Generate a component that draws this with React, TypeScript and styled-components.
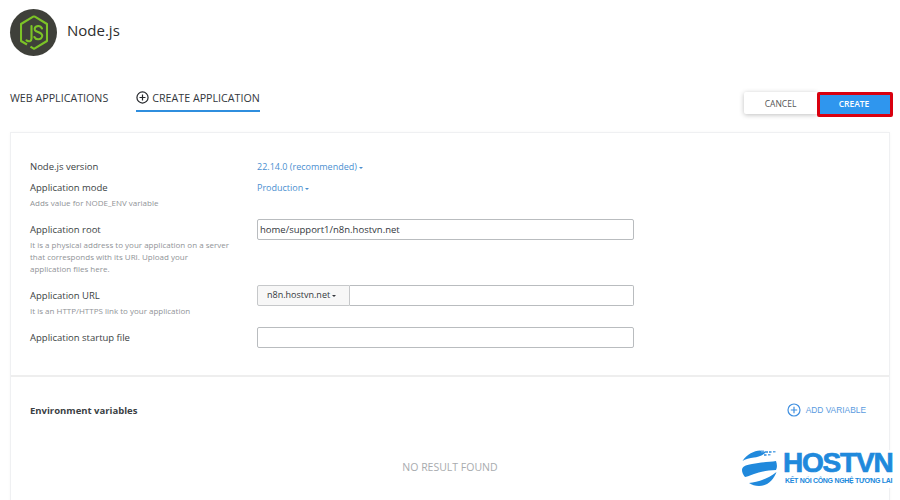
import React from "react";
import styled, { createGlobalStyle } from "styled-components";

const GlobalStyle = createGlobalStyle`
  html, body {
    margin: 0;
    padding: 0;
    background: #fff;
    font-family: "Open Sans", "Noto Sans", sans-serif;
    overflow: hidden;
  }
`;

const Page = styled.div`
  position: relative;
  width: 900px;
  height: 500px;
  overflow: hidden;
  padding: 9px 7px 0 10px;
  box-sizing: border-box;
`;

const Header = styled.header`
  display: flex;
  align-items: flex-start;
  gap: 10px;
  height: 47px;
`;

const LogoCircle = styled.div`
  width: 47px;
  height: 47px;
  border-radius: 50%;
  background: #3f403a;
  display: flex;
  align-items: center;
  justify-content: center;
`;

const Title = styled.h1`
  margin: 12px 0 0;
  font-size: 15px;
  line-height: 18px;
  font-weight: 400;
  color: #2d2d2d;
`;

const TabBar = styled.div`
  display: flex;
  justify-content: space-between;
  align-items: flex-start;
  margin-top: 26px;
  height: 50px;
`;

const Tabs = styled.nav`
  display: flex;
  gap: 28px;
  margin-top: 9px;
`;

const Tab = styled.div<{ $active?: boolean }>`
  display: flex;
  align-items: flex-start;
  gap: 3px;
  height: 19px;
  font-size: 10.7px;
  line-height: 14px;
  color: #33373d;
  border-bottom: ${(p) => (p.$active ? "2px solid #2f8ede" : "none")};
`;

const Actions = styled.div`
  display: flex;
  align-items: flex-start;
  margin-top: 10px;
`;

const CancelButton = styled.button`
  width: 73px;
  height: 22px;
  border: none;
  border-radius: 2px 0 0 2px;
  background: #fff;
  box-shadow: 0 1px 5px rgba(0, 0, 0, 0.25);
  font: 400 8.5px "Open Sans", sans-serif;
  color: #555;
`;

const CreateButton = styled.button`
  width: 76px;
  height: 25px;
  box-sizing: border-box;
  border: 3px solid #d9000f;
  border-radius: 2px;
  background: #2f96ee;
  font: 600 8.5px "Open Sans", sans-serif;
  color: #fff;
  padding: 0 2px 3px 0;
`;

const Card = styled.section`
  width: 880px;
  height: 380px;
  box-sizing: border-box;
  border: 1px solid #eff0f2;
  border-bottom: none;
  box-shadow: 0 0 3px rgba(0, 0, 0, 0.03);
`;

const FormArea = styled.div`
  height: 244px;
  box-sizing: border-box;
  padding: 27px 19px 0;
  border-bottom: 2px solid #eeeeee;
`;

const Row = styled.div<{ $h: number }>`
  display: grid;
  grid-template-columns: 227px 1fr;
  height: ${(p) => p.$h}px;
`;

const LabelCell = styled.div<{ $pad?: number }>`
  padding-top: ${(p) => p.$pad ?? 0}px;
`;

const Label = styled.div`
  font-size: 9.5px;
  line-height: 14px;
  color: #3b3f44;
`;

const Hint = styled.div`
  width: 200px;
  font-size: 8px;
  line-height: 12px;
  color: #909397;
  margin-top: 2px;
`;

const Dropdown = styled.span`
  font-size: 9px;
  line-height: 14px;
  color: #4b8fd0;
`;

const Caret = styled.i`
  display: inline-block;
  vertical-align: middle;
  width: 0;
  height: 0;
  margin-left: 2px;
  border: 2px solid transparent;
  border-top-color: currentColor;
  border-bottom: none;
`;

const TextInput = styled.div`
  width: 377px;
  height: 21px;
  box-sizing: border-box;
  border: 1px solid #b9bcbf;
  border-radius: 2px;
  padding: 0 2px;
  font-size: 9.5px;
  line-height: 19px;
  color: #33373d;
`;

const InputGroup = styled.div`
  display: flex;
  width: 377px;
  height: 21px;
`;

const Addon = styled.div`
  width: 93px;
  box-sizing: border-box;
  background: #f7f7f7;
  border: 1px solid #c6c8ca;
  border-radius: 2px 0 0 2px;
  padding-left: 9px;
  font-size: 9px;
  line-height: 17px;
  color: #33373d;
`;

const GroupField = styled.div`
  flex: 1;
  border: 1px solid #b9bcbf;
  border-left: none;
  border-radius: 0 2px 2px 0;
`;

const EnvArea = styled.div`
  padding: 26px 19px 0;
`;

const EnvHeader = styled.div`
  display: flex;
  justify-content: space-between;
  align-items: center;
  padding-right: 4px;
  height: 14px;
`;

const EnvTitle = styled.div`
  font-size: 9.5px;
  font-weight: 700;
  color: #3b3f44;
`;

const AddVariable = styled.div`
  display: flex;
  align-items: center;
  gap: 5px;
  font-family: "Liberation Sans", sans-serif;
  font-size: 8.4px;
  color: #5a9be0;
`;

const EmptyText = styled.div`
  margin-top: 43px;
  text-align: center;
  font-size: 10.5px;
  line-height: 14px;
  color: #a8abae;
`;

const Watermark = styled.div`
  position: absolute;
  left: 742px;
  top: 450px;
  width: 151px;
  height: 38px;
  display: flex;
  gap: 5px;
  background: #fff;
`;

const GlobeSlot = styled.div`
  flex: none;
  width: 36px;
  height: 37px;
`;

const WatermarkText = styled.div`
  display: flex;
  flex-direction: column;
  white-space: nowrap;
  color: #2089dc;
`;

const Brand = styled.div`
  font-family: "Liberation Sans", sans-serif;
  font-weight: 700;
  font-size: 28px;
  line-height: 26px;
  letter-spacing: -1.2px;
  -webkit-text-stroke: 0.7px #2089dc;
`;

const Slogan = styled.div`
  font-family: "Liberation Sans", sans-serif;
  font-weight: 700;
  font-size: 7px;
  line-height: 10px;
  letter-spacing: -0.3px;
  margin-left: 2px;
`;

const NodeIcon = () => (
  <svg width="28" height="35" viewBox="0 0 28 35" fill="none" stroke="#7cc327" strokeWidth="2.1">
    <path d="M14 1.2 L27 9 V26 L14 33.8 L10.5 31.7" strokeLinejoin="round" />
    <path d="M7 29.5 L1 26 V9 L14 1.2" strokeLinejoin="round" />
    <path d="M11.5 11 V23.5 C11.5 26.5 8.8 27 6.5 25.3" strokeLinecap="round" />
    <path d="M22 13.5 C21 11.5 19 10.8 17.5 11.1 C15 11.5 14.2 13.4 15 15.2 C16 17.2 21.6 17 22.2 20.3 C22.6 23 20 24.4 18 24.2 C16.4 24.1 15 23.3 14.4 22" strokeLinecap="round" />
  </svg>
);

const PlusCircle = ({ size, color, w }: { size: number; color: string; w: number }) => (
  <svg width={size} height={size} viewBox="0 0 14 14" fill="none" stroke={color} strokeWidth={w}>
    <circle cx="7" cy="7" r="6" />
    <path d="M7 3.8 V10.2 M3.8 7 H10.2" />
  </svg>
);

const Globe = () => (
  <svg width="36" height="37" viewBox="0 0 36 37" fill="#2089dc">
    <path d="M0.5 11 C5 4 12 1 18 0.5 L24 2 C21 6 15 7 12 7.5 C8 8 3 9 0.5 11 Z" />
    <path d="M0 20 C0 17 3 15 10 14 C20 12 28 12 34 11 C35 14 35.5 17 34 20 C26 20 18 22 12 24 C7 26 4 27 3 27 C1 25 0 22 0 20 Z" />
    <path d="M7 33 C15 32 26 29 34.5 22 C32 29 26 36 17 36 C13 36 10 35 7 33 Z" />
    <g fill="#5fa8e6">
      <rect x="19" y="0.5" width="3" height="2" />
      <rect x="23" y="1" width="3" height="2" />
      <rect x="27" y="1" width="2.5" height="2" />
      <rect x="31" y="1" width="2.5" height="1.5" />
      <rect x="22" y="4" width="2.5" height="2" />
      <rect x="26" y="4" width="2.5" height="1.5" />
    </g>
  </svg>
);

export default function App() {
  return (
    <>
      <GlobalStyle />
      <Page>
        <Header>
          <LogoCircle>
            <NodeIcon />
          </LogoCircle>
          <Title>Node.js</Title>
        </Header>

        <TabBar>
          <Tabs>
            <Tab>WEB APPLICATIONS</Tab>
            <Tab $active>
              <PlusCircle size={13} color="#25282c" w={1.3} />
              CREATE APPLICATION
            </Tab>
          </Tabs>
          <Actions>
            <CancelButton>CANCEL</CancelButton>
            <CreateButton>CREATE</CreateButton>
          </Actions>
        </TabBar>

        <Card>
          <FormArea>
            <Row $h={21}>
              <Label>Node.js version</Label>
              <Dropdown>
                22.14.0 (recommended)
                <Caret />
              </Dropdown>
            </Row>
            <Row $h={38}>
              <LabelCell>
                <Label>Application mode</Label>
                <Hint>Adds value for NODE_ENV variable</Hint>
              </LabelCell>
              <Dropdown>
                Production
                <Caret />
              </Dropdown>
            </Row>
            <Row $h={66}>
              <LabelCell $pad={4}>
                <Label>Application root</Label>
                <Hint>
                  It is a physical address to your application on a server that corresponds with its URI. Upload your
                  application files here.
                </Hint>
              </LabelCell>
              <TextInput>home/support1/n8n.hostvn.net</TextInput>
            </Row>
            <Row $h={42}>
              <LabelCell $pad={4}>
                <Label>Application URL</Label>
                <Hint>It is an HTTP/HTTPS link to your application</Hint>
              </LabelCell>
              <InputGroup>
                <Addon>
                  n8n.hostvn.net
                  <Caret />
                </Addon>
                <GroupField />
              </InputGroup>
            </Row>
            <Row $h={21}>
              <LabelCell $pad={4}>
                <Label>Application startup file</Label>
              </LabelCell>
              <TextInput />
            </Row>
          </FormArea>

          <EnvArea>
            <EnvHeader>
              <EnvTitle>Environment variables</EnvTitle>
              <AddVariable>
                <PlusCircle size={14} color="#3f8fe0" w={1.2} />
                ADD VARIABLE
              </AddVariable>
            </EnvHeader>
            <EmptyText>NO RESULT FOUND</EmptyText>
          </EnvArea>
        </Card>

        <Watermark>
          <GlobeSlot>
            <Globe />
          </GlobeSlot>
          <WatermarkText>
            <Brand>HOSTVN</Brand>
            <Slogan>KẾT NỐI CÔNG NGHỆ TƯƠNG LAI</Slogan>
          </WatermarkText>
        </Watermark>
      </Page>
    </>
  );
}
